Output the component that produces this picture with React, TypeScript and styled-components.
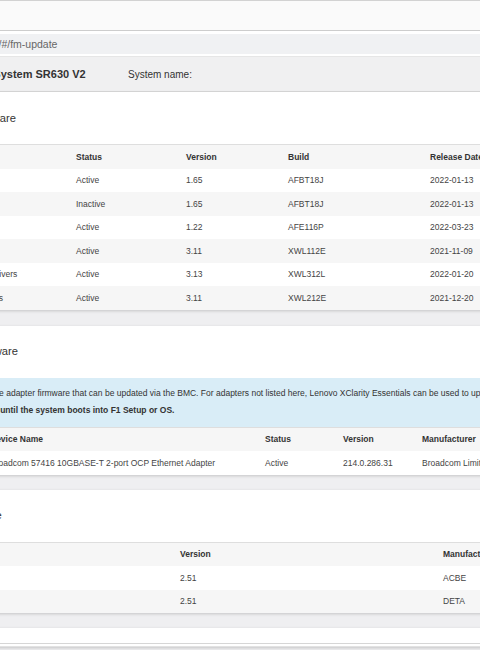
import React from 'react'
import styled, { createGlobalStyle } from 'styled-components'

const GlobalStyle = createGlobalStyle`
  html, body {
    margin:0;
    padding:0;
    background:#fff;
    overflow:hidden;
  }
  body {
    font-family:"Liberation Sans", Arial, sans-serif;
    color:#333;
  }
`

const Page = styled.div`
  width:1150px;
  margin-left:-150px;
  min-height:650px;
  background:#efeff1;
`
const Header = styled.div`
  background:#fff;
`
const TopBar = styled.div`
  height:29px;
  background:#fafafa;
  border-top:1px solid #d2d2d2;
  border-bottom:1px solid #cdcdcd;
  margin-bottom:3px;
`
const UrlBar = styled.div`
  height:20px;
  line-height:20px;
  padding-left:79px;
  background:#f0f1f3;
  color:#666;
  font-size:10.5px;
  margin-bottom:2px;
`
const SystemBar = styled.div`
  height:34px;
  display:flex;
  align-items:center;
  padding-left:114px;
  background:#f0f0f1;
  border-top:1px solid #e6e6e6;
  border-bottom:1px solid #d9d9d9;
`
const ModelName = styled.span`
  width:164px;
  font-size:11px;
  font-weight:bold;
  color:#333;
`
const SystemName = styled.span`
  font-size:10px;
  color:#333;
`
const Card = styled.section<{ $gap?: number }>`
  background:#fff;
  padding-left:70px;
  margin-bottom:${p => p.$gap ?? 16}px;
  box-shadow:0 1px 3px rgba(0,0,0,0.18);
`
const CardTitle = styled.h2`
  margin:0;
  height:52px;
  display:flex;
  align-items:center;
  padding:0 0 1px 9px;
  box-sizing:border-box;
  font-size:11.2px;
  font-weight:normal;
  color:#333;
`
const Info = styled.div`
  margin-left:-70px;
  padding:7px 0 8px 22px;
  background:#d9edf7;
  font-size:8.5px;
  line-height:17px;
  color:#333;
  white-space:nowrap;
`
const InfoLine = styled.div<{ $bold?: boolean }>`
  font-weight:${p => (p.$bold ? 'bold' : 'normal')};
`
const Table = styled.table`
  border-collapse:collapse;
  table-layout:fixed;
  font-size:8.5px;
  color:#444;
`
const Col = styled.col<{ $w: number }>`
  width:${p => p.$w}px;
`
const Th = styled.th`
  height:23.5px;
  padding:0 8px;
  text-align:left;
  font-weight:bold;
  color:#333;
  background:#f6f6f6;
  border-top:1px solid #dedede;
  white-space:nowrap;
  overflow:hidden;
`
const Tr = styled.tr`
  &:nth-child(even) td {
    background:#f6f6f6;
  }
`
const Td = styled.td`
  height:23.5px;
  padding:0 8px;
  background:#fff;
  white-space:nowrap;
  overflow:hidden;
`
const Divider = styled.div`
  height:15px;
  border-bottom:1px solid #d6d6d6;
  margin-left:-70px;
`
const SubDivider = styled.div`
  height:2px;
  border-bottom:1px solid #e2e2e2;
  margin-left:-70px;
`

type TableProps = { widths: number[]; head: string[]; rows: string[][] }

function DataTable({ widths, head, rows }: TableProps) {
  return (
    <Table>
      <colgroup>
        {widths.map((w, i) => <Col key={i} $w={w} />)}
      </colgroup>
      <thead>
        <tr>
          {head.map((h, i) => <Th key={i}>{h}</Th>)}
        </tr>
      </thead>
      <tbody>
        {rows.map((r, i) => (
          <Tr key={i}>
            {r.map((c, j) => <Td key={j}>{c}</Td>)}
          </Tr>
        ))}
      </tbody>
    </Table>
  )
}

const systemFw = [
  ['BMC (Primary)', 'Active', '1.65', 'AFBT18J', '2022-01-13', ''],
  ['BMC (Backup)', 'Inactive', '1.65', 'AFBT18J', '2022-01-13', ''],
  ['UEFI', 'Active', '1.22', 'AFE116P', '2022-03-23', ''],
  ['LXPM', 'Active', '3.11', 'XWL112E', '2021-11-09', ''],
  ['LXPM Windows Drivers', 'Active', '3.13', 'XWL312L', '2022-01-20', ''],
  ['LXPM Linux Drivers', 'Active', '3.11', 'XWL212E', '2021-12-20', ''],
]

const adapterFw = [
  ['', 'Broadcom 57416 10GBASE-T 2-port OCP Ethernet Adapter', 'Active', '214.0.286.31', 'Broadcom Limited', ''],
]

const psuFw = [
  ['Power Supply 1', '2.51', 'ACBE', ''],
  ['Power Supply 2', '2.51', 'DETA', ''],
]

export default function App() {
  return (
    <>
      <GlobalStyle />
      <Page>
        <Header>
          <TopBar />
          <UrlBar>https://10.1.1.1/#/fm-update</UrlBar>
          <SystemBar>
            <ModelName>ThinkSystem SR630 V2</ModelName>
            <SystemName>System name:</SystemName>
          </SystemBar>
        </Header>

        <Card>
          <CardTitle>System Firmware</CardTitle>
          <DataTable
            widths={[148, 110, 102, 142, 138, 200]}
            head={['Name', 'Status', 'Version', 'Build', 'Release Date', 'Action']}
            rows={systemFw}
          />
        </Card>

        <Card $gap={15}>
          <CardTitle>Adapter Firmware</CardTitle>
          <Info>
            <InfoLine>The following table shows all of the adapter firmware that can be updated via the BMC. For adapters not listed here, Lenovo XClarity Essentials can be used to update the firmware.</InfoLine>
            <InfoLine $bold>Note: Adapters may not appear until the system boots into F1 Setup or OS.</InfoLine>
          </Info>
          <DataTable
            widths={[62, 275, 78, 79, 146, 200]}
            head={['', 'Device Name', 'Status', 'Version', 'Manufacturer', 'Action']}
            rows={adapterFw}
          />
        </Card>

        <Card $gap={15}>
          <CardTitle>PSU Firmware</CardTitle>
          <DataTable
            widths={[252, 263, 146, 200]}
            head={['Name', 'Version', 'Manufacturer', 'Action']}
            rows={psuFw}
          />
        </Card>

        <Card>
          <Divider />
          <SubDivider />
        </Card>
      </Page>
    </>
  )
}
